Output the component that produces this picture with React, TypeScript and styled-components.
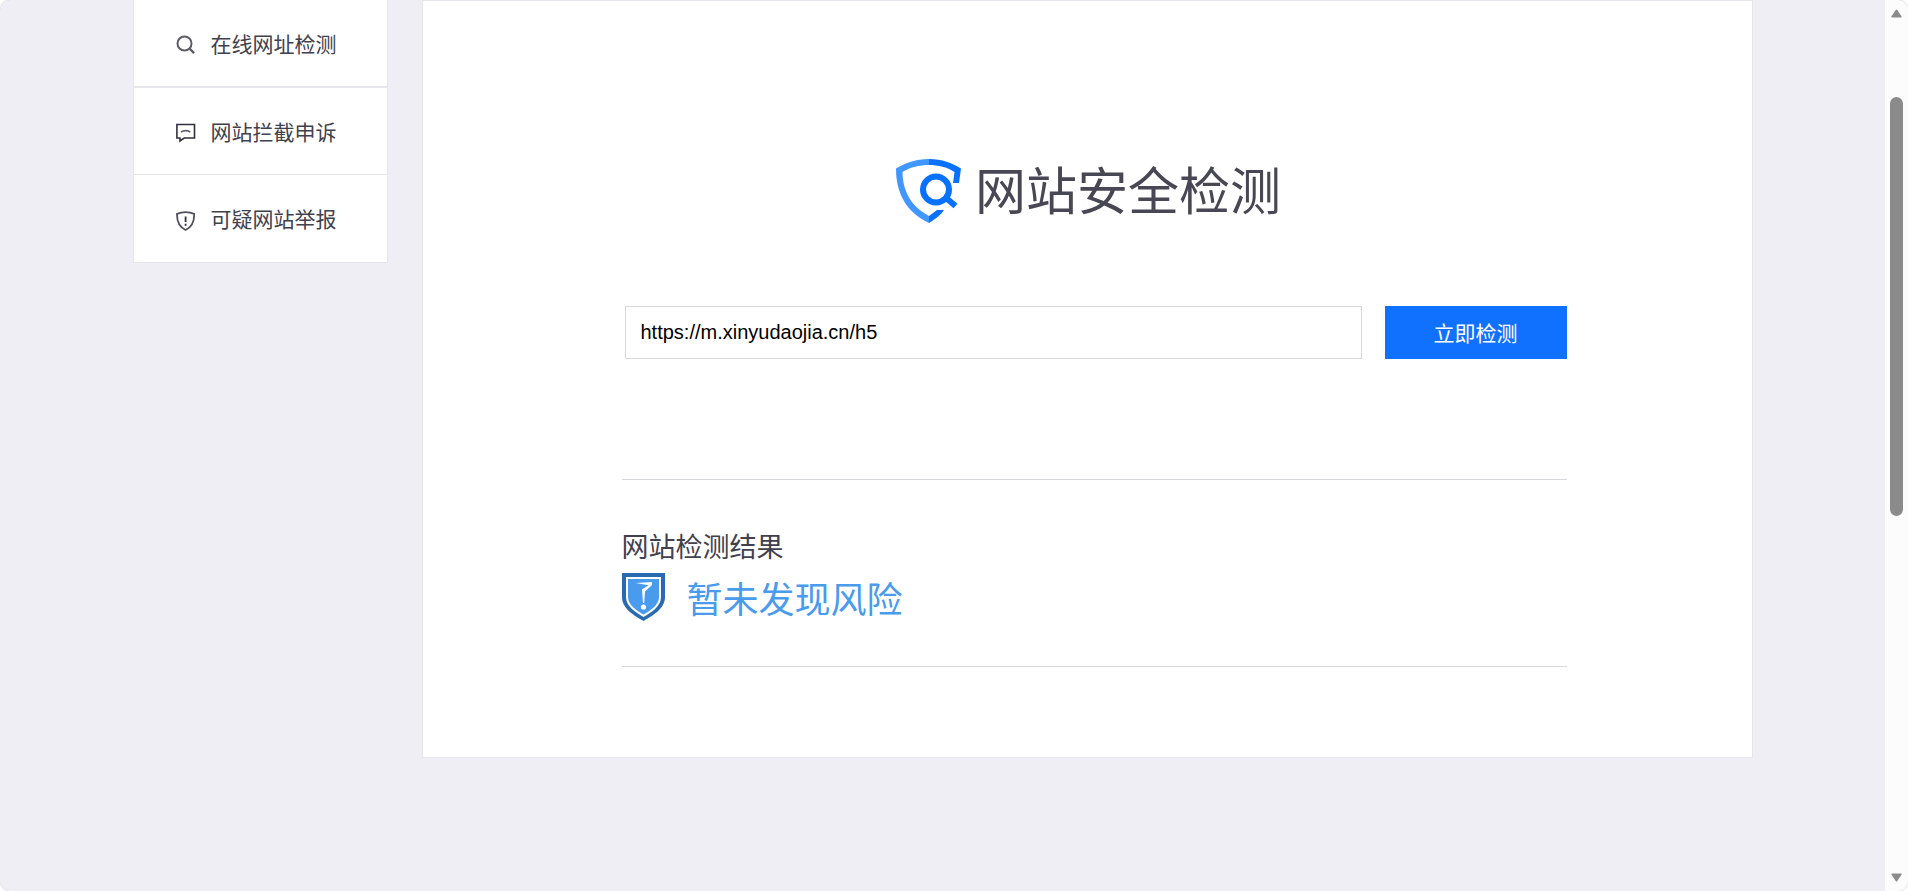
import React, { useState } from "react";
import styled, { createGlobalStyle } from "styled-components";

const sans = `"Liberation Sans", "Noto Sans CJK SC", sans-serif`;

const GlobalStyle = createGlobalStyle`
  *, *::before, *::after { box-sizing: border-box; }
  body {
    margin: 0;
    background: #ffffff;
    color: #41414d;
    font-family: "Noto Sans CJK SC", sans-serif;
    font-weight: 400;
  }
`;

const Window = styled.div`
  display: flex;
  height: 100vh;
  overflow: hidden;
  border-radius: 11px;
  background: #efeef4;
  box-shadow: 0 0 2px #b8b8bc;
`;

const Viewport = styled.div`
  flex: 1;
  min-width: 0;
  overflow: hidden;
`;

const Page = styled.div`
  display: flex;
  align-items: flex-start;
  gap: 34px;
  width: 100%;
  max-width: 1620px;
  margin: 0 auto;
`;

const Sidebar = styled.nav`
  flex: 0 0 255px;
  border: 1px solid #e6e5ec;
  border-top: 0;
  background: #ffffff;
`;

const NavItem = styled.a<{ $current?: boolean }>`
  display: flex;
  align-items: center;
  gap: 15px;
  height: ${(p) => (p.$current ? 88 : 87)}px;
  padding: 4px 0 0 42px;
  border-bottom: ${(p) => (p.$current ? 2 : 1)}px solid #e6e5ec;
  color: inherit;
  font-size: 21px;
  line-height: 30px;
  text-decoration: none;

  &:last-child { border-bottom: 0; }

  svg { flex: none; }
`;

const NavLabel = styled.span`
  padding-bottom: 5px;
`;

const Panel = styled.main`
  flex: 1;
  min-width: 0;
  padding: 157px 185px 90px 199px;
  border: 1px solid #e6e5ec;
  background: #ffffff;
`;

const Brand = styled.h1`
  display: flex;
  align-items: center;
  justify-content: center;
  gap: 14px;
  height: 66px;
  margin: 0 11px 82px 0;
  color: #484854;
  font-size: 51px;
  font-weight: 400;
  line-height: 66px;
  white-space: nowrap;
`;

const BrandName = styled.span`
  padding-bottom: 6px;
`;

const SearchForm = styled.form`
  display: flex;
  gap: 23px;
  height: 53px;
  margin: 0 0 120px 3px;
`;

const UrlInput = styled.input`
  flex: 1;
  min-width: 0;
  padding: 0 15px;
  border: 1px solid #d7d7de;
  border-radius: 0;
  outline: 0;
  background: #ffffff;
  color: #000000;
  font: 400 20px ${sans};
`;

const SubmitButton = styled.button`
  flex: 0 0 182px;
  padding: 0 0 2px;
  border: 0;
  background: #1171ff;
  color: #ffffff;
  font: inherit;
  font-size: 21px;
  line-height: 30px;
  cursor: pointer;
`;

const Result = styled.section`
  padding: 45px 0 40px;
  border-top: 1px solid #d7d7de;
  border-bottom: 1px solid #d7d7de;
`;

const ResultTitle = styled.h2`
  margin: 0 0 1px;
  font-size: 27px;
  font-weight: 400;
  line-height: 42px;
`;

const Verdict = styled.p`
  display: flex;
  align-items: center;
  gap: 22px;
  margin: 0;
  height: 58px;
  color: #489bed;
  font-size: 36px;
  line-height: 58px;
`;

const ScrollTrack = styled.div`
  display: flex;
  flex: 0 0 23px;
  flex-direction: column;
  align-items: center;
  padding: 9px 0;
  background: #fcfcfc;
`;

const ScrollThumb = styled.div`
  width: 13px;
  height: 48%;
  margin: 79px 0 auto;
  border-radius: 7px;
  background: #8b8b8b;
`;

const SearchIcon = () => (
  <svg width="20" height="20" viewBox="0 0 20 20" fill="none" stroke="#5c5c68" strokeWidth="2" aria-hidden="true">
    <circle cx="8.500" cy="8.500" r="7" />
    <path d="M13.500 13.500l4.600 4.600" strokeWidth="2.400" />
  </svg>
);

const CommentIcon = () => (
  <svg width="20" height="20" viewBox="0 0 20 20" fill="none" stroke="#2f2f40" strokeWidth="1.6" aria-hidden="true">
    <path d="M.9 1.500h17.600v13.500H8.200l-4.200 3v-3H.9z" />
    <path d="M5 9.200c2.400-2.100 7-2.100 9.400 0" stroke="#5c5c68" />
  </svg>
);

const ReportIcon = () => (
  <svg width="20" height="20" viewBox="0 0 20 20" fill="none" stroke="#50505d" strokeWidth="1.8" aria-hidden="true">
    <path d="M1 2.800Q9.500-.7 18.200 2.800C18.400 9.500 16 15.700 9.600 19 3.200 15.700.8 9.500 1 2.800z" />
    <path d="M9.600 5.500v5.500M9.600 12.700v2" stroke="#2f2f40" />
  </svg>
);

const BrandMark = () => (
  <svg width="65" height="65" viewBox="0 0 65 65" fill="none" aria-hidden="true">
    <path d="M33 0C20 0 9 4 0 9.500C0 34 10 53 33 64V57C15 47 7 33 6.500 13C15 8 23 6 33 6z" fill="#4296ff" />
    <path d="M33 0C46 0 56 4 65 9.500L63 24H57L58.500 13C51 8 42 6 33 6z" fill="#0872ff" />
    <path d="M33 64V57L41 51H48C45 56 39 60 33 64z" fill="#0872ff" />
    <circle cx="40" cy="30.500" r="13" stroke="#0872ff" strokeWidth="6" />
    <path d="M49 38l10.500 9" stroke="#0872ff" strokeWidth="6" />
  </svg>
);

const VerdictShield = () => (
  <svg width="43" height="48" viewBox="0 0 43 48" aria-hidden="true">
    <path d="M0 0h43v24C43 36 30 43 21.500 48 13 43 0 36 0 24z" fill="#296bb3" />
    <path d="M4 4h35v20C39 33.500 29 39.500 21.500 44 14 39.500 4 33.500 4 24z" fill="#ffffff" />
    <path d="M6 6h31v18C37 32 28.500 37.500 21.500 41.500 14.500 37.500 6 32 6 24z" fill="#489bed" />
    <path d="M13.700 10L30 9v3l-7 6.500-.8 11.500h-1.200L20 16.500l6.500-4.300z" fill="#ffffff" />
    <circle cx="21.500" cy="34" r="2.600" fill="#ffffff" />
  </svg>
);

const Arrow = ({ down }: { down?: boolean }) => (
  <svg width="11" height="9" viewBox="0 0 11 9" aria-hidden="true">
    <path
      d={down ? "M1 .5h9q1 0 .6 1L6.300 8q-.8 1-1.600 0L.4 1.500Q0 .5 1 .5z" : "M1 8.500h9q1 0 .6-1L6.300 1q-.8-1-1.600 0L.4 7.500q-.4 1 .6 1z"}
      fill="#8b8b8b"
    />
  </svg>
);

export default function App() {
  const [url, setUrl] = useState("https://m.xinyudaojia.cn/h5");

  return (
    <>
      <GlobalStyle />
      <Window>
        <Viewport>
          <Page>
            <Sidebar>
              <NavItem href="#check" $current><SearchIcon /><NavLabel>在线网址检测</NavLabel></NavItem>
              <NavItem href="#appeal"><CommentIcon /><NavLabel>网站拦截申诉</NavLabel></NavItem>
              <NavItem href="#report"><ReportIcon /><NavLabel>可疑网站举报</NavLabel></NavItem>
            </Sidebar>
            <Panel>
              <Brand><BrandMark /><BrandName>网站安全检测</BrandName></Brand>
              <SearchForm onSubmit={(e) => e.preventDefault()}>
                <UrlInput type="text" aria-label="网址" value={url} onChange={(e) => setUrl(e.target.value)} />
                <SubmitButton type="submit">立即检测</SubmitButton>
              </SearchForm>
              <Result>
                <ResultTitle>网站检测结果</ResultTitle>
                <Verdict><VerdictShield />暂未发现风险</Verdict>
              </Result>
            </Panel>
          </Page>
        </Viewport>
        <ScrollTrack aria-hidden="true">
          <Arrow />
          <ScrollThumb />
          <Arrow down />
        </ScrollTrack>
      </Window>
    </>
  );
}
